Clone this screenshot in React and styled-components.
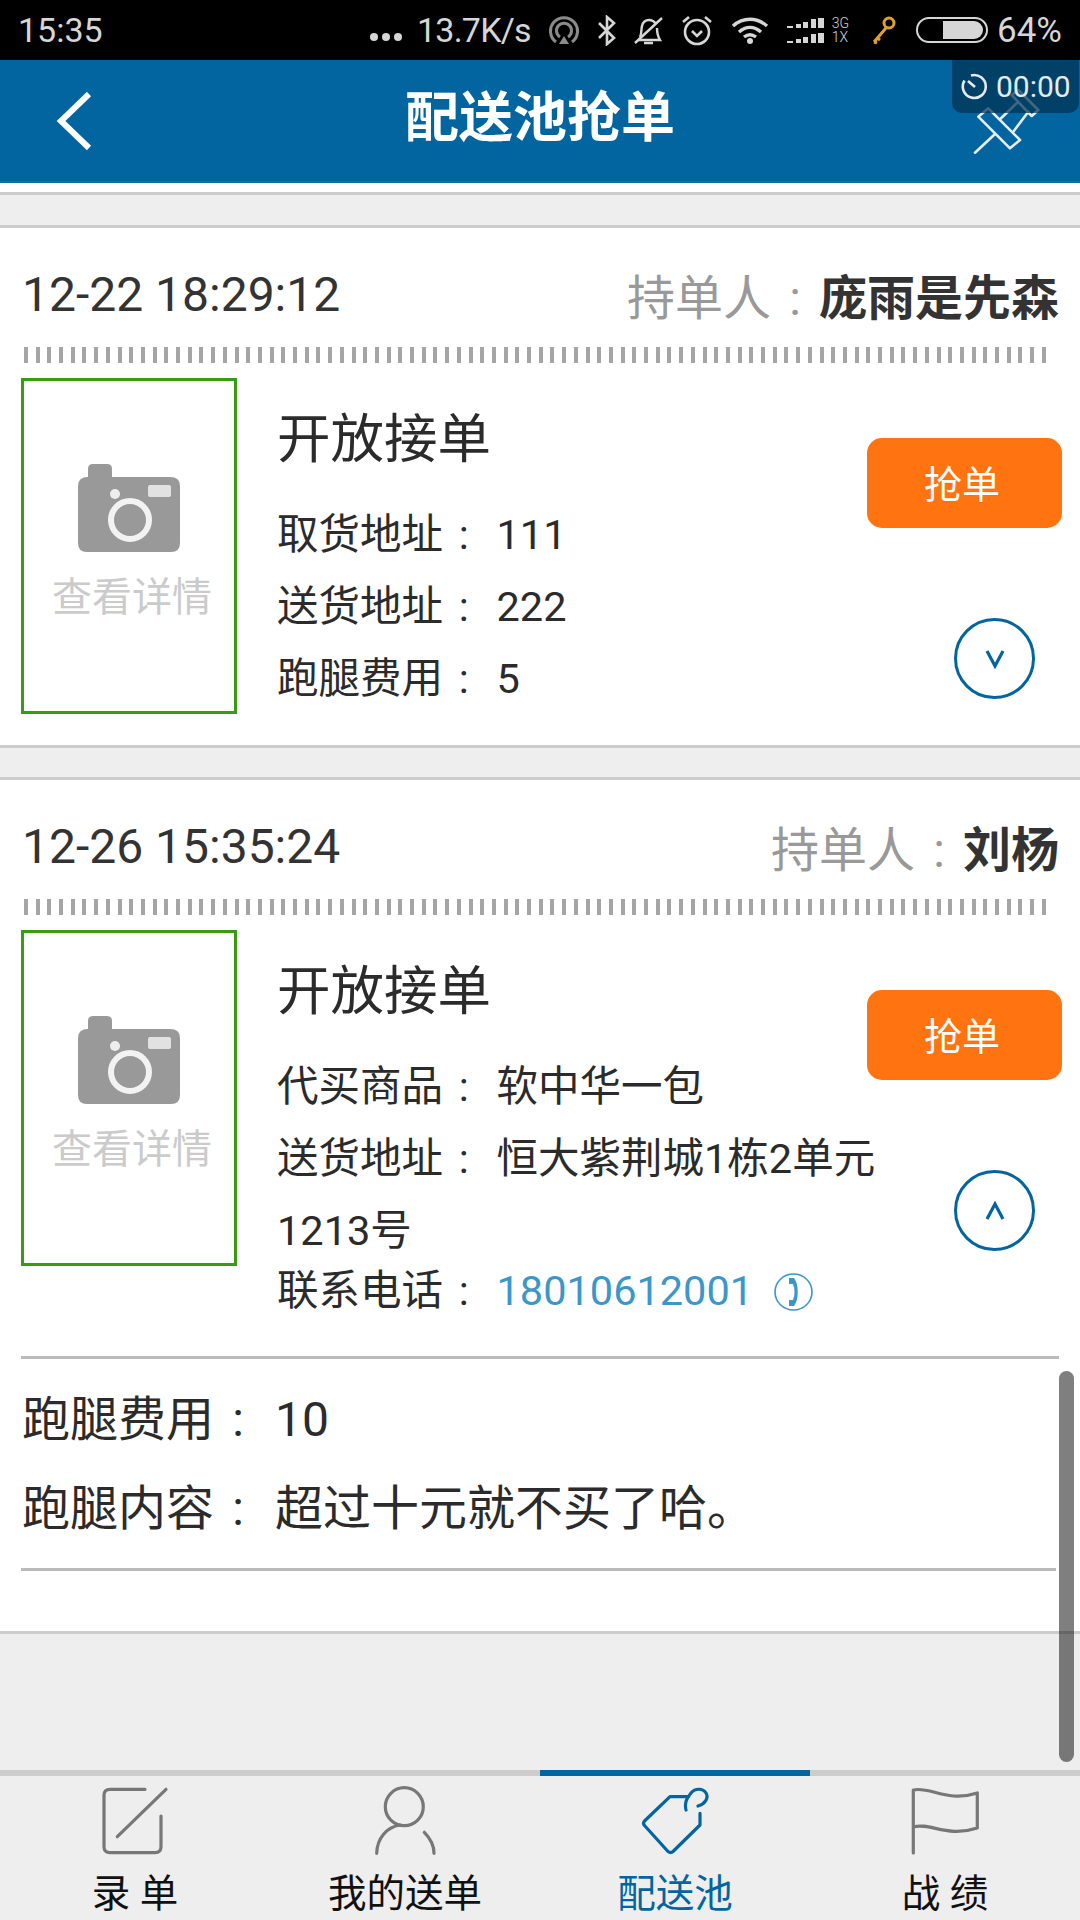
import React from "react";
import styled, { createGlobalStyle } from "styled-components";

const BLUE = "#02659f";
const SANS = `Roboto, "Noto Sans CJK SC", sans-serif`;

const Global = createGlobalStyle`
  html, body { margin: 0; padding: 0; background: #fff; }
  * { box-sizing: border-box; }
`;

const Page = styled.div`
  position: relative;
  width: 1080px;
  height: 1920px;
  overflow: hidden;
  display: flex;
  flex-direction: column;
  background: #fff;
  font-family: ${SANS};
  color: #333;
`;

/* status bar */
const StatusBar = styled.div`
  height: 60px;
  flex: none;
  background: #000;
  color: #d6d6d6;
  display: flex;
  align-items: center;
  padding: 0 18px;
  font-size: 34px;
`;
const Clock = styled.span`
  margin-right: auto;
`;
const Dots = styled.span`
  display: flex;
  gap: 4px;
  margin-top: 14px;
  i {
    width: 8px;
    height: 8px;
    border-radius: 50%;
    background: #d6d6d6;
  }
`;
const Speed = styled.span`
  margin-left: 15px;
  letter-spacing: -0.8px;
`;
const Sb = styled.svg`
  flex: none;
  margin-left: ${(p) => p.$ml}px;
  fill: none;
  stroke: #d6d6d6;
`;
const Net = styled.span`
  margin-left: 8px;
  display: flex;
  flex-direction: column;
  font-size: 14px;
  line-height: 14px;
  font-weight: 300;
`;
const Percent = styled.span`
  margin-left: 9px;
  font-size: 35px;
`;

/* nav */
const NavBar = styled.div`
  height: 123px;
  flex: none;
  background: ${BLUE};
  border-bottom: 2px solid #1c6aa0;
  display: grid;
  grid-template-columns: 1fr auto 1fr;
  align-items: center;
`;
const Title = styled.div`
  font-size: 54px;
  font-weight: 700;
  color: #fff;
  line-height: 60px;
  margin-top: -3px;
`;
const NavBack = styled.svg`
  margin-left: 56px;
  fill: none;
  stroke: #fff;
  stroke-width: 6;
`;
const NavPin = styled.svg`
  justify-self: end;
  margin-right: 38px;
  margin-top: 2px;
  fill: none;
  stroke: #e6eef4;
  stroke-width: 2.6;
  stroke-linecap: round;
  stroke-linejoin: round;
`;
const Timer = styled.div`
  position: absolute;
  top: 60px;
  right: 1px;
  width: 127px;
  height: 53px;
  border-radius: 0 0 10px 10px;
  background: rgba(2, 50, 82, 0.72);
  color: #e4ecf1;
  display: flex;
  align-items: center;
  padding-left: 9px;
  gap: 8px;
  font-size: 30px;
`;
const WhiteGap = styled.div`
  height: 9px;
  flex: none;
  background: #fff;
`;

/* separators */
const Band = styled.div`
  height: ${(p) => p.$h}px;
  flex: none;
  background: #eee;
  border-top: 3px solid #ccc;
  border-bottom: 3px solid #ccc;
`;
const Tail = styled.div`
  flex: 1;
  background: #eee;
  border-top: 3px solid #ccc;
`;

/* order card */
const Card = styled.div`
  flex: none;
  background: #fff;
`;
const CardHead = styled.div`
  height: 119px;
  padding: 13px 21px 0 22px;
  display: flex;
  align-items: center;
  justify-content: space-between;
`;
const DateText = styled.span`
  font-size: 48px;
  color: #333;
`;
const Holder = styled.span`
  font-size: 48px;
  color: #999;
`;
const Colon = styled.span`
  display: inline-block;
  width: 1em;
  text-align: center;
  font-family: Roboto, sans-serif;
`;
const HolderName = styled.b`
  color: #333;
  font-weight: 700;
`;
const Dash = styled.div`
  height: 16px;
  width: 1023px;
  margin-left: 24px;
  background: repeating-linear-gradient(90deg, #a5a5a5 0 4px, transparent 4px 11.7px);
`;
const Body = styled.div`
  display: flex;
  padding: 15px 18px ${(p) => p.$pad}px 21px;
`;
const Photo = styled.div`
  flex: none;
  width: 216px;
  height: 336px;
  border: 3px solid #3a9a10;
  padding-top: 83px;
  display: flex;
  flex-direction: column;
  align-items: center;
`;
const PhotoText = styled.div`
  margin-top: 23px;
  margin-left: 6px;
  font-size: 40px;
  line-height: 46px;
  color: #cbcbcb;
  white-space: nowrap;
`;
const Info = styled.div`
  flex: 1;
  min-width: 0;
  margin-left: 40px;
  white-space: nowrap;
`;
const OrderTitle = styled.div`
  height: 121px;
  line-height: 123px;
  font-size: 53.5px;
  color: #2b2b2b;
`;
const Row = styled.div`
  font-size: 41.5px;
  line-height: ${(p) => p.$h || 72}px;
  color: #2b2b2b;
`;
const Value = styled.span`
  margin-left: 12px;
`;
const Phone = styled.span`
  margin-left: 12px;
  color: #3b97c9;
`;
const PhoneIcon = styled.svg`
  margin-left: 21px;
  vertical-align: -6px;
  fill: none;
  stroke: #3b97c9;
`;
const Actions = styled.div`
  flex: none;
  width: 195px;
  padding-top: 60px;
  display: flex;
  flex-direction: column;
  align-items: flex-end;
`;
const GrabButton = styled.button`
  width: 195px;
  height: 90px;
  border: 0;
  border-radius: 15px;
  background: #ff7410;
  color: #fff;
  font-family: ${SANS};
  font-size: 38px;
  padding: 0 5px 3px 0;
`;
const Toggle = styled.div`
  width: 81px;
  height: 81px;
  margin: 90px 27px 0 0;
  border: 3px solid ${BLUE};
  border-radius: 50%;
  display: flex;
  align-items: center;
  justify-content: center;
  svg {
    fill: none;
    stroke: ${BLUE};
    stroke-width: 3.2;
  }
`;
const Divider = styled.div`
  height: 3px;
  width: ${(p) => p.$w}px;
  margin-left: 21px;
  margin-top: ${(p) => p.$mt}px;
  background: #bbb;
`;
const Details = styled.div`
  padding: 16px 0 15px 22px;
`;
const DetailRow = styled.div`
  font-size: 48px;
  line-height: 89px;
  color: #2b2b2b;
`;
const DetailValue = styled.span`
  margin-left: 13px;
`;
const CardEnd = styled.div`
  height: 60px;
`;

/* tabs */
const TabBar = styled.div`
  height: 150px;
  flex: none;
  display: flex;
  background: #eee;
`;
const Tab = styled.div`
  flex: 1;
  height: 150px;
  border-top: 6px solid ${(p) => (p.$active ? BLUE : "#ccc")};
  padding-top: 10px;
  display: flex;
  flex-direction: column;
  align-items: center;
  color: ${(p) => (p.$active ? BLUE : "#111")};
`;
const TabIcon = styled.svg`
  fill: none;
  stroke: ${(p) => (p.$active ? BLUE : "#777")};
  stroke-width: 3.2;
  stroke-linecap: round;
  stroke-linejoin: round;
`;
const TabLabel = styled.div`
  font-size: 38.5px;
  line-height: 44px;
  margin-top: 16px;
  white-space: pre;
`;
const Scrollbar = styled.div`
  position: absolute;
  left: 1059px;
  top: 1371px;
  width: 15px;
  height: 391px;
  border-radius: 8px;
  background: rgba(0, 0, 0, 0.5);
`;

function StatusIcons() {
  return (
    <>
      <Sb $ml={18} width="30" height="29" viewBox="0 0 30 29" strokeWidth="3" style={{ stroke: "#8a8a8a" }}>
        <path d="M7 26a13.5 13.5 0 1 1 16 0" />
        <path d="M11 21a7.5 7.5 0 1 1 8 0" />
        <path d="M15 20l5 8H10z" fill="#8a8a8a" strokeWidth="0" />
      </Sb>
      <Sb $ml={18} width="20" height="31" viewBox="0 0 20 31" strokeWidth="2.6">
        <path d="M2 8l15 15-7 6V2l7 6L2 23" />
      </Sb>
      <Sb $ml={16} width="31" height="31" viewBox="0 0 31 31" strokeWidth="2.4">
        <path d="M7 22c2-4 1-8 2-11 1-4 4-6 7-6s5 1 7 4M24 13c0 4 0 7 3 12H5" />
        <path d="M11 28h9M2 28L29 3" />
      </Sb>
      <Sb $ml={17} width="32" height="31" viewBox="0 0 32 31" strokeWidth="2.6">
        <circle cx="16" cy="17" r="12" />
        <path d="M11 16l5 5 5-5M2 7l6-5M30 7l-6-5" />
      </Sb>
      <Sb $ml={18} width="38" height="27" viewBox="0 0 38 27" strokeWidth="3.4">
        <path d="M2 9c10-9 24-9 34 0M8 15c7-6 15-6 22 0M13 20c4-3 8-3 12 0" />
        <circle cx="19" cy="24" r="3" fill="#d6d6d6" strokeWidth="0" />
      </Sb>
      <Sb $ml={18} width="37" height="25" viewBox="0 0 37 25" style={{ stroke: "none", fill: "#d6d6d6" }}>
        <path d="M0 8h6v2H0zM9 6h5v4H9zM16 4h5v6h-5zM24 1h5v9h-5zM31 0h6v10h-6zM0 23h6v2H0zM9 21h5v4H9zM16 19h5v6h-5zM24 16h5v9h-5zM31 15h6v10h-6z" />
      </Sb>
      <Net>
        <span>3G</span>
        <span>1X</span>
      </Net>
      <Sb $ml={21} width="26" height="28" viewBox="0 0 26 28" style={{ stroke: "#e0a030" }} strokeWidth="3">
        <circle cx="19" cy="7" r="5" />
        <path d="M16 12L4 26M4 26l3 1M7 22l3 2" />
      </Sb>
      <Sb $ml={20} width="72" height="26" viewBox="0 0 72 26" strokeWidth="2">
        <rect x="1" y="1" width="70" height="24" rx="12" />
        <path d="M27 4h31a9 9 0 0 1 0 18H27z" fill="#d6d6d6" strokeWidth="0" />
      </Sb>
    </>
  );
}

function Camera() {
  return (
    <svg width="102" height="88" viewBox="0 0 102 88">
      <path d="M10 13V5q0-5 5-5h14q5 0 5 5v8h58q10 0 10 9v57q0 9-9 9H9q-9 0-9-9V22q0-9 10-9z" fill="#999" />
      <circle cx="37" cy="30" r="5" fill="#eee" />
      <rect x="70" y="21" width="23" height="12" rx="2" fill="#e2e2e2" />
      <circle cx="52" cy="56" r="19" fill="#999" stroke="#f2f2f2" strokeWidth="6" />
    </svg>
  );
}

function Chevron({ up }) {
  return (
    <svg width="20" height="20" viewBox="0 0 20 20">
      <path d={up ? "M2 18L10 3l8 15" : "M2 2l8 15L18 2"} />
    </svg>
  );
}

function OrderHead({ date, holder }) {
  return (
    <>
      <CardHead>
        <DateText>{date}</DateText>
        <Holder>
          持单人<Colon>:</Colon>
          <HolderName>{holder}</HolderName>
        </Holder>
      </CardHead>
      <Dash />
    </>
  );
}

function PhotoBox() {
  return (
    <Photo>
      <Camera />
      <PhotoText>查看详情</PhotoText>
    </Photo>
  );
}

function Field({ label, children, h }) {
  return (
    <Row $h={h}>
      {label}
      <Colon>:</Colon>
      {children}
    </Row>
  );
}

export default function App() {
  return (
    <Page>
      <Global />
      <StatusBar>
        <Clock>15:35</Clock>
        <Dots>
          <i />
          <i />
          <i />
        </Dots>
        <Speed>13.7K/s</Speed>
        <StatusIcons />
        <Percent>64%</Percent>
      </StatusBar>

      <NavBar>
        <NavBack width="36" height="58" viewBox="0 0 36 58">
          <path d="M33 2L5 29l28 27" />
        </NavBack>
        <Title>配送池抢单</Title>
        <NavPin width="70" height="70" viewBox="0 0 70 70">
          <path d="M6.3 29.7l10-8.4L48 53l-10 8.3zM39.7 8l6.6-5 20 20-6.6 6zM28 32.3l18.3-17.6M41.3 44.7l15-20M3 65.7L23 47" />
        </NavPin>
      </NavBar>
      <Timer>
        <svg width="27" height="27" viewBox="0 0 27 27" fill="none" stroke="#e4ecf1" strokeWidth="2.6">
          <path d="M10 2.5a11.5 11.5 0 1 1-6.5 5" />
          <path d="M7 8l7 6" />
        </svg>
        00:00
      </Timer>
      <WhiteGap />
      <Band $h={36} />

      <Card>
        <OrderHead date="12-22 18:29:12" holder="庞雨是先森" />
        <Body $pad={30}>
          <PhotoBox />
          <Info>
            <OrderTitle>开放接单</OrderTitle>
            <Field label="取货地址">
              <Value>111</Value>
            </Field>
            <Field label="送货地址">
              <Value>222</Value>
            </Field>
            <Field label="跑腿费用">
              <Value>5</Value>
            </Field>
          </Info>
          <Actions>
            <GrabButton>抢单</GrabButton>
            <Toggle>
              <Chevron />
            </Toggle>
          </Actions>
        </Body>
      </Card>

      <Band $h={35} />

      <Card>
        <OrderHead date="12-26 15:35:24" holder="刘杨" />
        <Body $pad={0}>
          <PhotoBox />
          <Info>
            <OrderTitle>开放接单</OrderTitle>
            <Field label="代买商品">
              <Value>软中华一包</Value>
            </Field>
            <Field label="送货地址">
              <Value>恒大紫荆城1栋2单元</Value>
              <br />
              1213号
            </Field>
            <Field label="联系电话" h={48}>
              <Phone>18010612001</Phone>
              <PhoneIcon width="39" height="38" viewBox="0 0 39 38" strokeWidth="1.6">
                <ellipse cx="19.5" cy="19" rx="18.5" ry="18" />
                <path d="M15 5h5c5 6 5 22 0 28h-5v-6h4c2-5 2-11 0-16h-4z" fill="#3b97c9" strokeWidth="0" />
              </PhoneIcon>
            </Field>
          </Info>
          <Actions>
            <GrabButton>抢单</GrabButton>
            <Toggle>
              <Chevron up />
            </Toggle>
          </Actions>
        </Body>
        <Divider $w={1038} $mt={41} />
        <Details>
          <DetailRow>
            跑腿费用<Colon>:</Colon>
            <DetailValue>10</DetailValue>
          </DetailRow>
          <DetailRow>
            跑腿内容<Colon>:</Colon>
            <DetailValue>超过十元就不买了哈。</DetailValue>
          </DetailRow>
        </Details>
        <Divider $w={1035} $mt={0} />
        <CardEnd />
      </Card>

      <Tail />

      <TabBar>
        <Tab>
          <TabIcon width="70" height="70" viewBox="0 0 70 70">
            <path d="M45 3.3H10Q4 3.3 4 9.3V60.7Q4 66.7 10 66.7H55Q61 66.7 61 60.7V30M66 3.3L17.3 50.7" />
          </TabIcon>
          <TabLabel>录 单</TabLabel>
        </Tab>
        <Tab>
          <TabIcon width="70" height="70" viewBox="0 0 70 70">
            <circle cx="34.3" cy="20.7" r="19" />
            <path d="M6.7 67.3C7 52 17 41 30 39M54.3 46.3C60 52 64 59 64 67.3" />
          </TabIcon>
          <TabLabel>我的送单</TabLabel>
        </Tab>
        <Tab $active>
          <TabIcon $active width="70" height="70" viewBox="0 0 70 70">
            <path d="M48.3 10.7H30L4.5 35q-2 2.5 0 4.5L28 65.5q2.7 2 5 0L60 39V27.3" />
            <path d="M58 20C65 18 69 12 66 7C63 2 55 2 51 7C48 11 44 15 46 24" />
          </TabIcon>
          <TabLabel>配送池</TabLabel>
        </Tab>
        <Tab>
          <TabIcon width="70" height="70" viewBox="0 0 70 70">
            <path d="M3.3 4C20 0 37 17 67.3 7V42C37 52 20 36 3.3 41M3.3 4V67" />
          </TabIcon>
          <TabLabel>战 绩</TabLabel>
        </Tab>
      </TabBar>

      <Scrollbar />
    </Page>
  );
}
